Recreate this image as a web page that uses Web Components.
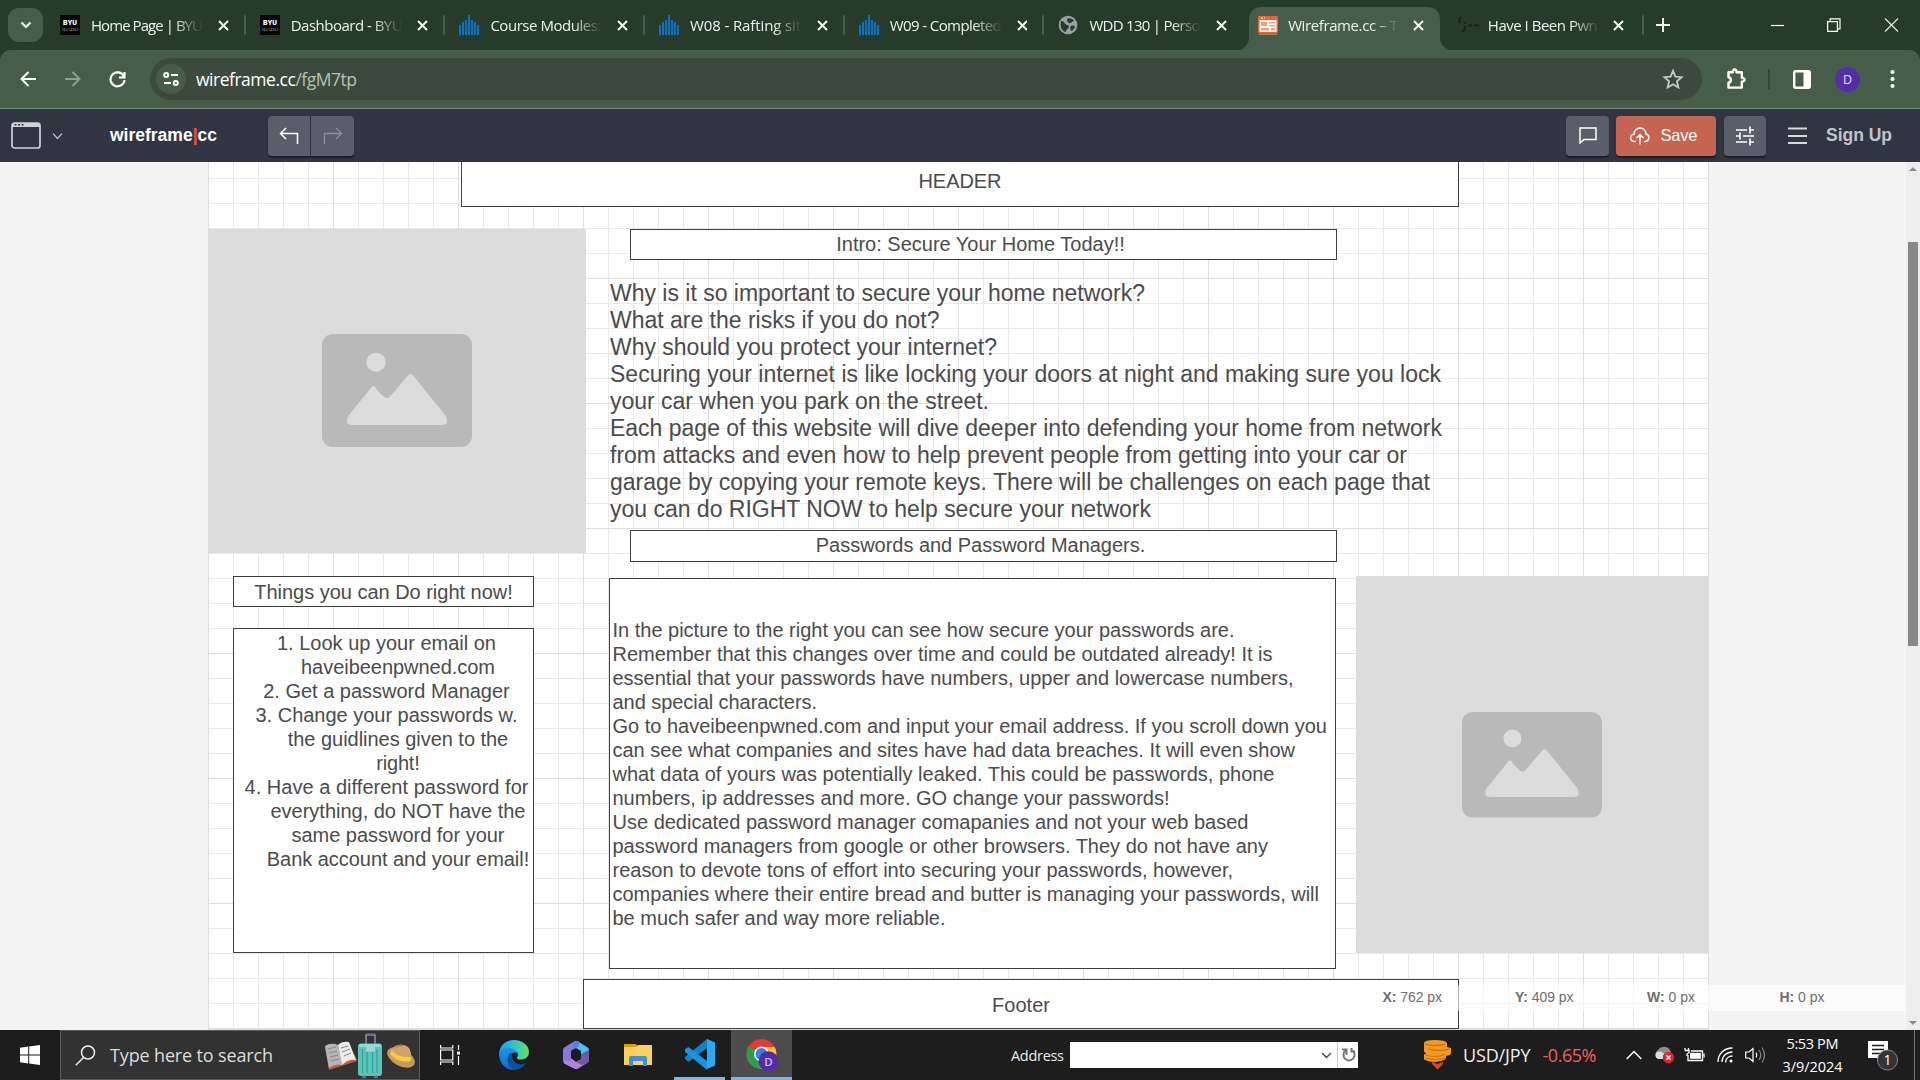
<!DOCTYPE html>
<html lang="en">
<head>
<meta charset="utf-8">
<title>Wireframe.cc</title>
<style>
html,body{margin:0;width:1920px;height:1080px;overflow:hidden;background:#f4f4f4}
</style>
</head>
<body>
<desktop-screen></desktop-screen>
<script>
const make = (name, html, after) => customElements.define(name, class extends HTMLElement {
  connectedCallback() {
    if (this.shadowRoot) return;
    const t = document.createElement('template');
    t.innerHTML = typeof html === 'function' ? html(this) : html;
    this.attachShadow({ mode: 'open' }).appendChild(t.content.cloneNode(true));
    if (after) after(this);
  }
});

/* One line of text, tracked so that it is exactly w pixels wide. */
make('fit-text', `<style>:host{display:block;white-space:nowrap;flex:none}span{display:inline-block;white-space:pre}</style><span><slot></slot></span>`, el => {
  const w = parseFloat(el.getAttribute('w'));
  if (!w) return;
  const s = el.shadowRoot.querySelector('span');
  const n = el.textContent.length;
  const ls = (w - s.getBoundingClientRect().width) / (n - 1);
  s.style.letterSpacing = ls + 'px';
  s.style.marginRight = -ls + 'px';
});

const fav = {
  byu: `<svg width="20" height="20"><rect width="20" height="20" fill="#050505"/><text x="10" y="9.6" font-family="Roboto" font-weight="900" font-size="7" text-anchor="middle" fill="#fff" textLength="14">BYU</text><text x="10" y="16" font-family="Liberation Serif" font-size="5" text-anchor="middle" fill="#999" textLength="16">IDAHO</text></svg>`,
  bars: `<svg width="20" height="20" fill="#0a72c4"><path d="M0 10h2v10H0zM3 7h2v13H3zM6 5h2v15H6zM9 0h2v20H9zM12 5h2v15h-2zM15 7h2v13h-2zM18 10h2v10h-2z"/></svg>`,
  globe: `<svg width="20" height="20"><circle cx="10" cy="10" r="9.3" fill="#9aa0a6"/><path d="M3 6c4 0 3 3 6 4 3 0 2 4 0 4-1 2-1 3-2 3-4-2-5-7-4-11zM10 3c2 1 5 0 6 3-2 0-2 2-4 2s-4-2-2-5zM13 11c2-1 4 0 4 1-1 2-2 3-4 4-1-2-1-4 0-5z" fill="#263b2a"/></svg>`,
  wire: `<svg width="20" height="20"><rect y="1" width="20" height="17.5" rx="1" fill="#f2602c"/><rect x="1.5" y="5" width="17" height="12" fill="#fff"/><path d="M3 3h2M6 3h1" stroke="#fff"/><path d="M3 7h6v4H3zM11 7h6v1.5h-6zM11 10h6v1.5h-6zM3 13h8v2.5H3zM13 13h4v2.5h-4z" fill="#fb9a77"/><path d="M1 19.3h18" stroke="#9a9a86"/></svg>`,
  pwn: `<svg width="22" height="20" fill="none" stroke="#17231a" stroke-width="1.8"><path d="M3 2C1 4 1 6 2 8M7 7v2M7 11c0 3-1 5-3 6M10 10.5h4M16 10.5h5"/></svg>`
};

make('browser-tab', el => `<style>
:host{display:flex;align-items:center;position:relative;width:199.7px;height:50px;box-sizing:border-box;padding-left:14px;flex:none}
.f{width:20px;height:20px;flex:none;z-index:1}
.t{width:113px;margin-left:11px;overflow:hidden;z-index:1;height:24px;line-height:24px;color:#eef2ee;font:15px/24px "Open Sans",sans-serif;-webkit-mask-image:linear-gradient(90deg,#000 74%,transparent 100%);mask-image:linear-gradient(90deg,#000 74%,transparent 100%)}
.x{margin-left:15px;z-index:1}
.s{margin-left:15px;width:2px;height:20px;background:#47604b;border-radius:1px;flex:none}
.bg{position:absolute;left:-10px;top:7px}
:host([nosep]) .s{visibility:hidden}
:host([late]) .t{margin-left:10px}
:host([late]) .x{margin-left:13.500px}
:host([late]) .s{margin-left:17.500px}
</style>${el.hasAttribute('active') ? `<svg class="bg" width="222" height="44"><path d="M0 44C9 44 15 38 15 30V14Q15 0 28 0H193Q206 0 206 14V30C206 38 212 44 221 44z" fill="#465e49"/></svg>` : ''}
<div class="f">${fav[el.getAttribute('icon')]}</div>
<div class="t"><fit-text w="${el.getAttribute('w')}">${el.textContent}</fit-text></div>
<svg class="x" width="11" height="11"><path d="M1 1l9 9M10 1l-9 9" stroke="#f4f6f4" stroke-width="2"/></svg><div class="s"></div>`);

make('tab-strip', `<style>
:host{display:flex;height:50px;background:#263b2a;align-items:center}
.m{width:35px;height:34px;border-radius:11px;background:#465e49;margin:0 3px 0 8px;display:grid;place-items:center;flex:none}
svg{display:block;flex:none}
</style>
<div class="m"><svg width="12" height="8"><path d="M1.500 1.500L6 6l4.500-4.500" fill="none" stroke="#fff" stroke-width="2.200"/></svg></div>
<browser-tab icon="byu" w="112">Home Page | BYU</browser-tab>
<browser-tab icon="byu" w="112">Dashboard - BYU</browser-tab>
<browser-tab icon="bars" w="111">Course Modules:</browser-tab>
<browser-tab icon="bars" w="111">W08 - Rafting sit</browser-tab>
<browser-tab icon="bars" w="112">W09 - Completed</browser-tab>
<browser-tab icon="globe" w="111" nosep>WDD 130 | Perso</browser-tab>
<browser-tab icon="wire" w="110" active nosep late>Wireframe.cc – T</browser-tab>
<browser-tab icon="pwn" w="110" late>Have I Been Pwn</browser-tab>
<svg style="margin-left:12px" width="14" height="14"><path d="M7 0v14M0 7h14" stroke="#f4f6f4" stroke-width="2"/></svg>
<svg style="margin-left:101px" width="13" height="14"><path d="M0 7.500h13" stroke="#fff" stroke-width="1.200"/></svg>
<svg style="margin-left:43px" width="14" height="14" fill="none" stroke="#fff" stroke-width="1.200"><path d="M.6 3.600h9.800v9.800H.6zM3.200 3.400V.8h9.800v10h-2.400"/></svg>
<svg style="margin-left:43px" width="15" height="14"><path d="M1 .5l13 13M14 .5l-13 13" stroke="#dfe4df" stroke-width="1.200"/></svg>`);

make('address-bar', `<style>
:host{display:block;background:#263b2a}
.b{display:flex;height:58px;align-items:center;background:#465e49;border-bottom:1px solid #6f8a72;border-radius:11px 11px 0 0}
svg{display:block;flex:none}
.o{display:flex;align-items:center;margin-left:24px;width:1552px;height:42px;border-radius:21px;background:#3c4a3e;flex:none;box-sizing:border-box;padding-left:6px}
.c{width:30px;height:30px;border-radius:50%;background:#465e49;display:grid;place-items:center}
.u{margin-left:10px;font:17.500px/30px "Open Sans",sans-serif;color:#fff}
.u span{color:#b4c2b2}
.a{width:25px;height:25px;border-radius:50%;background:#512da8;margin-left:24px;display:grid;place-items:center;color:#e8e0f8;font:12.500px/25px "Open Sans",sans-serif;flex:none}
</style><div class="b">
<svg style="margin-left:20px" width="16" height="16" fill="none" stroke="#fff" stroke-width="2"><path d="M8.500 1L1.500 8l7 7M1.500 8H16"/></svg>
<svg style="margin-left:29px" width="16" height="16" fill="none" stroke="#90a08f" stroke-width="2"><path d="M7.500 1l7 7-7 7M14.500 8H0"/></svg>
<svg style="margin-left:28px" width="17" height="17" fill="none" stroke="#fff" stroke-width="2.200"><path d="M14.800 5.200A7 7 0 1 0 15.500 9M15.500 1v5.500H10"/></svg>
<div class="o"><div class="c"><svg width="16" height="14" fill="none" stroke="#fff" stroke-width="2"><circle cx="3.200" cy="3" r="2"/><path d="M8 3h7M1 11h7"/><circle cx="12.800" cy="11" r="2"/></svg></div>
<div class="u"><fit-text w="161">wireframe.cc<span>/fgM7tp</span></fit-text></div>
<svg style="margin-left:1305px" width="22" height="20" fill="none" stroke="#c4ccc4" stroke-width="1.800"><path d="M11 1.800l2.400 5.900 6.200.5-4.700 4.100 1.500 6.200L11 15.200l-5.400 3.300 1.500-6.200-4.700-4.100 6.200-.5z"/></svg></div>
<svg style="margin-left:23px" width="22" height="22" fill="none" stroke="#fff" stroke-width="2.400"><path d="M3.500 4.200h4.200c-.4-3.600 4.200-3.600 3.800 0h5.300v5.600c3.600-.2 3.600 4 0 3.800v6H3.500v-4.800c3.200-.6 3.200-5 0-5.600z" stroke-linejoin="round"/></svg>
<div style="margin-left:21px;width:1.500px;height:20px;background:#2f4733;flex:none"></div>
<svg style="margin-left:23.500px" width="18" height="19"><rect x="1.200" y="1.200" width="15.600" height="16.600" rx="1.500" fill="none" stroke="#fff" stroke-width="2.400"/><path d="M10.500 1h6v17h-6z" fill="#fff"/></svg>
<div class="a">D</div>
<svg style="margin-left:30px" width="5" height="20" fill="#fff"><circle cx="2.500" cy="3" r="2.100"/><circle cx="2.500" cy="10" r="2.100"/><circle cx="2.500" cy="17" r="2.100"/></svg>
</div>`);

make('app-bar', `<style>
:host{display:flex;height:53px;background:#303542;align-items:center;font-family:"Liberation Sans",sans-serif}
svg{display:block;flex:none}
.l{font-weight:700;font-size:17.500px;color:#fff;margin-left:47px;margin-top:-1px}.l span{color:#f0503c}
.g{display:grid;place-items:center;height:40px;background:#5a5e69;box-shadow:0 1.500px 1px #1c2029;flex:none}
.s{display:flex;align-items:center;width:100px;height:40px;background:#c66452;border-radius:4px;box-shadow:0 1.500px 1px #1c2029;margin-left:7px;color:#fff;font-size:16.500px;flex:none}
</style>
<svg style="margin-left:11px" width="30" height="27"><rect x="1" y="1" width="28" height="25" rx="2.500" fill="none" stroke="#d0d2d6" stroke-width="1.700"/><path d="M1 5V3a2 2 0 0 1 2-2h24a2 2 0 0 1 2 2v2z" fill="#d0d2d6"/><path d="M3.500 2.800h2M7 2.800h2M10.500 2.800h2" stroke="#303542" stroke-width="1.500"/></svg>
<svg style="margin-left:11px" width="11" height="8" fill="none" stroke="#b9bcc2" stroke-width="1.200"><path d="M1 1.500l4.500 5 4.500-5"/></svg>
<div class="l"><fit-text w="107">wireframe<span>|</span>cc</fit-text></div>
<div class="g" style="margin-left:51px;width:42px;border-radius:4px 0 0 4px"><svg width="20" height="18" fill="none" stroke="#fff" stroke-width="1.500"><path d="M7 1L1.500 6.500 7 12M1.500 6.500H18.500V17"/></svg></div>
<div class="g" style="margin-left:1px;width:43px;border-radius:0 4px 4px 0"><svg width="20" height="18" fill="none" stroke="#8d9098" stroke-width="1.300"><path d="M13 1l5.500 5.500L13 12M18.500 6.500H1.500V17"/></svg></div>
<div class="g" style="margin-left:1212px;width:43px;border-radius:4px"><svg width="18" height="17" fill="none" stroke="#fff" stroke-width="1.500"><path d="M1 1h16v11.500H5L1 16z"/></svg></div>
<div class="s"><svg style="margin-left:14px" width="20" height="18" fill="none" stroke="#fff" stroke-width="1.500"><path d="M6 14.500H4.500A3.600 3.600 0 0 1 4 7.300C4 3.500 6.800 1 10 1s6 2.500 6 6c4 1 3.600 7.500-1 7.500h-1M10 17.500V8M6.500 11L10 7.500l3.500 3.500"/></svg><fit-text w="37" style="margin-left:10.500px">Save</fit-text></div>
<div class="g" style="margin-left:8px;width:42px;border-radius:4px"><svg width="18" height="20" fill="none" stroke="#fff" stroke-width="1.600"><path d="M0 4h11M14 4h4M14 .5v7M0 10h4M4 6.500v7M7 10h11M0 16h11M14 16h4M14 12.500v7"/></svg></div>
<svg style="margin-left:22px" width="19" height="18" stroke="#d6d8dc" stroke-width="1.800"><path d="M0 1.500h19M0 9h19M0 16h19"/></svg>
<fit-text w="66" style="margin-left:19px;color:#c1c4c9;font-weight:700;font-size:17.500px">Sign Up</fit-text>`);

/* A bordered node on the canvas; x/y/w/h are its canvas coordinates. */
const place = el => `left:${el.getAttribute('x')}px;top:${el.getAttribute('y')}px;width:${el.getAttribute('w')}px;height:${el.getAttribute('h')}px`;
make('wire-box', el => `<style>
:host{position:absolute;${place(el)};box-sizing:border-box;border:1px solid #3f3f3f;background:#fff;display:flex;flex-direction:column;align-items:center;justify-content:center}
:host([plain]){border-color:transparent;background:none;align-items:flex-start;justify-content:flex-start}
:host([left]){align-items:flex-start;padding-left:2.500px}
:host([top]){justify-content:flex-start;padding-top:2px}
</style><slot></slot>`);
make('wire-image', el => `<style>:host{position:absolute;${place(el)};background:#dcdcdc;display:grid;place-items:center}svg{display:block}</style>
<svg width="${el.getAttribute('s')}" style="margin:${el.getAttribute('nudge')}" viewBox="0 0 150 113"><rect width="150" height="113" rx="11" fill="#b9b9b9"/><circle cx="54" cy="28.300" r="9.600" fill="#dcdcdc"/><path d="M30 84.500L48.500 55.500Q51.500 49.500 54.500 55.500L61.500 62.500Q65 65.500 68 62.500L85 42.500Q88.500 37.500 92 42.500L123.500 81.500Q128 91 119.500 91H30.500Q22 91 26.500 81.500L48.500 54.500Q51.500 49.500 54.500 54.500z" fill="#dcdcdc"/></svg>`);

const lines = (arr) => arr.map(([t, w, m]) => `<fit-text w="${w}" style="${m ? 'padding-right:23px' : ''}">${t}</fit-text>`).join('');
make('wire-canvas', `<style>
:host{display:block;position:relative;height:868px;background:#f4f4f4;overflow:hidden;color:#4b4b4b;font:20px/24px "Liberation Sans",sans-serif}
.p{margin-left:208px;width:1501px;height:867px;background-color:#fff;background-image:linear-gradient(90deg,#dedede 1px,transparent 1px),linear-gradient(#dedede 1px,transparent 1px),linear-gradient(90deg,#e9e9e9 1px,transparent 1px),linear-gradient(#e9e9e9 1px,transparent 1px);background-size:125px 125px,125px 125px,25px 25px,25px 25px;background-position:0 -9px,0 -9px,0 -9px,0 -9px;border-bottom:1px solid #ddd}
.i{position:absolute;left:1366px;top:823px;width:542px;height:26px;background:rgba(255,255,255,.6);display:flex;align-items:center;font-size:14px;line-height:24px;color:#6e6e6e}
.i fit-text{width:0;margin-top:-2px}
.sb{position:absolute;right:0;top:0;width:14px;height:868px;background:#ededed;display:flex;flex-direction:column;align-items:center}
.th{width:10px;height:404px;background:#888}
</style>
<div class="p"></div>
<wire-box x="461" y="-45" w="998" h="90"><fit-text w="83" style="margin-top:38px">HEADER</fit-text></wire-box>
<wire-image x="209" y="67" w="377" h="324" s="150" nudge="0 2px 2px 0"></wire-image>
<wire-box x="630" y="67" w="707" h="31"><fit-text w="288.500" style="padding:0 6px 2px 0">Intro: Secure Your Home Today!!</fit-text></wire-box>
<wire-box plain x="609" y="117" w="850" h="250" style="font-size:23px;line-height:27px">${lines([
['Why is it so important to secure your home network?',535],
['What are the risks if you do not?',329.5],
['Why should you protect your internet?',387],
['Securing your internet is like locking your doors at night and making sure you lock',831],
['your car when you park on the street.',379],
['Each page of this website will dive deeper into defending your home from network',832],
['from attacks and even how to help prevent people from getting into your car or',797],
['garage by copying your remote keys. There will be challenges on each page that',820],
['you can do RIGHT NOW to help secure your network',541]])}</wire-box>
<wire-box x="630" y="368" w="707" h="32"><fit-text w="329.500" style="padding:0 6px 2px 0">Passwords and Password Managers.</fit-text></wire-box>
<wire-box x="233" y="414" w="301" h="31"><fit-text w="258.500">Things you can Do right now!</fit-text></wire-box>
<wire-box top x="233" y="466" w="301" h="325" style="padding-left:29px">${lines([
['1. Look up your email on',219,1],['haveibeenpwned.com',194],['2. Get a password Manager',246.5,1],['3. Change your passwords w.',262,1],['the guidlines given to the',220.5],['right!',43.5],['4. Have a different password for',284,1],['everything, do NOT have the',255],['same password for your',213],['Bank account and your email!',262.5]])}</wire-box>
<wire-box left x="609" y="416" w="727" h="391">${lines([
['In the picture to the right you can see how secure your passwords are.',622],
['Remember that this changes over time and could be outdated already! It is',660],
['essential that your passwords have numbers, upper and lowercase numbers,',681],
['and special characters.',204.5],
['Go to haveibeenpwned.com and input your email address. If you scroll down you',714.5],
['can see what companies and sites have had data breaches. It will even show',682.5],
['what data of yours was potentially leaked. This could be passwords, phone',662],
['numbers, ip addresses and more. GO change your passwords!',557],
['Use dedicated password manager comapanies and not your web based',636],
['password managers from google or other browsers. They do not have any',655.5],
['reason to devote tons of effort into securing your passwords, however,',620.5],
['companies where their entire bread and butter is managing your passwords, will',706.5],
['be much safer and way more reliable.',333]])}</wire-box>
<wire-image x="1356" y="414" w="352.500" h="377" s="140" nudge="1px 0 0 0"></wire-image>
<wire-box x="583" y="817" w="876" h="50"><fit-text w="58" style="padding-top:2px">Footer</fit-text></wire-box>
<div class="i"><fit-text w="59.500" style="margin-left:16.500px"><b>X:</b> 762 px</fit-text><fit-text w="58.500" style="margin-left:132.500px"><b>Y:</b> 409 px</fit-text><fit-text w="48" style="margin-left:132px"><b>W:</b> 0 px</fit-text><fit-text w="45" style="margin-left:132.500px"><b>H:</b> 0 px</fit-text></div>
<div class="sb"><svg style="margin-top:5px;flex:none" width="8" height="4"><path d="M0 4L4 0l4 4z" fill="#8a8a8a"/></svg><div class="th" style="margin-top:71px;flex:none"></div><svg style="margin-top:375px;flex:none" width="8" height="4"><path d="M0 0l4 4 4-4z" fill="#8a8a8a"/></svg></div>`);

make('task-bar', `<style>
:host{display:flex;height:50px;background:#1d1d1d;align-items:center;font-family:"Open Sans",sans-serif;color:#fff}
svg{display:block;flex:none}
.s{display:flex;align-items:center;box-sizing:border-box;width:360px;height:50px;margin-left:20px;background:#323232;border:1px solid #5c5c5c;flex:none}
.ap{display:flex;flex-direction:column;height:50px;flex:none;box-sizing:border-box;padding-top:9px;justify-content:space-between;align-items:center}
.ap i{display:block;height:3px;background:#76b9ed;align-self:stretch}
.ad{display:flex;width:288px;height:26px;background:#fff;margin-left:6px;align-items:center;flex:none}
.ck{width:62px;font-size:14.500px;line-height:23px;display:flex;flex-direction:column;align-items:center;flex:none;margin-top:-1px}
</style>
<svg style="margin-left:20px" width="20" height="20" fill="#fff"><path d="M0 2.700L8.200 1.600V9.500H0zM9.200 1.400L20 0v9.500H9.200zM0 10.500h8.200v7.900L0 17.300zM9.200 10.500H20V20L9.200 18.600z"/></svg>
<div class="s">
<svg style="margin-left:14px" width="21" height="21" fill="none" stroke="#eee" stroke-width="1.500"><circle cx="13" cy="7.500" r="6.500"/><path d="M8.500 12.500L.8 20.200"/></svg>
<fit-text w="163" style="margin-left:14px;font-size:18px;color:#dcdcdc">Type here to search</fit-text>
<svg style="margin-left:52px" width="92" height="48" viewBox="0 0 92 48">
<path d="M0 17l4 22 28-9-2-6z" fill="#c0603a"/><path d="M0 15l4 22q7-5 13-3L13 14q-7-3-13 1z" fill="#b4b5b8"/><path d="M13 14Q17 10 24 11l7 18q-8-1-14 5z" fill="#ecebea"/><path d="M3 18l8-2M4 22l8-2M5 26l8-2M6 30l8-2M16 17l7-2M17 21l8-3M19 25l7-3" stroke="#888" stroke-width="1"/>
<path d="M41 13V4h9v9" fill="none" stroke="#8d8f9a" stroke-width="1.600"/><path d="M41 3.500h9" stroke="#6f6fa0" stroke-width="2"/><rect x="33" y="12.500" width="24" height="32.500" rx="3" fill="#5cc4b8"/><rect x="34" y="13" width="22" height="3" rx="1.500" fill="#86e2d6"/><path d="M37.500 18v24M42 21v21M47.500 21v21M52 18v24" stroke="#349f94" stroke-width="1.200"/><rect x="41" y="15.500" width="9" height="5" rx="1.500" fill="#a5d6d0"/><path d="M37 46h4M49 46h4" stroke="#66689a" stroke-width="2.500"/>
<ellipse cx="76" cy="26.500" rx="15" ry="8.500" transform="rotate(28 76 26.500)" fill="#c39a5a"/><path d="M65 24q2 6 14 8 6 0 7-3l0-7q-1-8-10-8.500-9 0-11 10z" fill="#cfa468"/><path d="M66.500 19q6 8 19.500 7l0 4Q73 32 65 23z" fill="#f7cf3c"/><path d="M70 17q4-5 10-2-5-1-10 2z" fill="#8a6430"/></svg></div>
<svg style="margin-left:20px" width="20" height="20" fill="none" stroke="#fff" stroke-width="1.200"><path d="M.6 5h12.200v10H.6zM.6 0v3h12.200V0M.6 20v-3h12.200v3M18.500 0v5M18.500 11v9"/><path d="M17 6.500h3v3h-3z" fill="#fff" stroke="none"/></svg>
<svg style="margin-left:39px" width="30" height="30" viewBox="0 0 30 30"><defs><linearGradient id="e1" x1="0" x2="1"><stop offset="0" stop-color="#1a9fe6"/><stop offset=".55" stop-color="#35c5cf"/><stop offset="1" stop-color="#66e04c"/></linearGradient><linearGradient id="e2" x1="0" x2="0" y1="0" y2="1"><stop offset="0" stop-color="#1f97e4"/><stop offset="1" stop-color="#0b6ad0"/></linearGradient></defs><path d="M0 13C1 5 7 0 15 0c9 0 15 6 15 12 0 5-4 7.500-8 7.500-3 0-4.500-1-4-2 2-2 1-6-3-7C9 9 2 9 0 13z" fill="url(#e1)"/><path d="M0 13C2 9 8 6.500 13 8.500c3 1 5 3 5 5-2-2-5-1-6 2-2 7 4 12 10 11-2 2-6 3.500-8 3.500C5 29 0 22 0 13z" fill="url(#e2)"/><path d="M12.500 12.500C7 15 7 27 15 30c5 0 10-3 12-7-5 3-11 1-13-3-1-3-1-5-1.500-7.500z" fill="#0c4f9c"/></svg>
<svg style="margin-left:33px" width="28" height="30" viewBox="0 0 28 30"><path d="M12 1.500q2-1 4 0L25 7q2 1 2 3v8l-8-3v-4l-5-3z" fill="#4cc0f2"/><path d="M12 1.500L3 7q-2 1-2 3v11q0 2 2 3l6-3v-9q0-2 2-3l6-3V2q-2-1.500-5-.5z" fill="#8479da"/><path d="M16 1.500q-3-1-5 1v6l-2 2 5-2.500 3-2V2z" fill="#5b7fe0"/><path d="M2 20q3 2 7 0v-2l5 4 5-2.500 8-2.500v3q0 2-2 3l-9 5.500q-2 1-4 0L3 24q-1-1-1-4z" fill="#b184dc"/><path d="M19 14l8-4v10q0 2-2 3l-5 2-6-3 5-3z" fill="#6d58ae"/><path d="M14 10l5 2.500v5.500l-5 3-5-3v-5.500z" fill="#1d1d1d"/></svg>
<svg style="margin-left:34px" width="28" height="24" viewBox="0 0 28 24"><path d="M0 1h12l2 3-2 3H0z" fill="#dd9c0b"/><path d="M0 4h12l2-2h14v20H0z" fill="#fcd05a"/><path d="M5 23V15q0-2 2-2h14q2 0 2 2v8h-4v-5H9v5z" fill="#3b93d8"/></svg>
<div class="ap" style="margin-left:22px;width:51px"><svg width="30" height="31" viewBox="0 0 30 31"><path d="M22 0v9L3.500 23 0 20V18z" fill="#1280ca"/><path d="M22 31v-9L3.500 8 0 10v3z" fill="#1b93dc"/><path d="M22 0l8 3.500v23L22 30z" fill="#2aaaf4"/></svg><i></i></div>
<div class="ap" style="margin-left:6px;width:61px;background:#4c4c4c"><svg width="34" height="33" viewBox="0 0 34 33" style="margin-left:3px"><circle cx="15.500" cy="15" r="15" fill="#e33b2e"/><path d="M2.500 7.500A15 15 0 0 0 15 30l7-12z" fill="#2c9f4b"/><path d="M15.500 8h13.200A15 15 0 0 1 15 30l7-12z" fill="#fcc629"/><circle cx="15.500" cy="15" r="7.500" fill="#fff"/><circle cx="15.500" cy="15" r="6" fill="#3b7de6"/><circle cx="22.500" cy="22.300" r="10" fill="#512da8"/><text x="22.500" y="26.500" text-anchor="middle" fill="#cdbfee" font-size="11.500" font-weight="600" font-family="Open Sans">D</text></svg><i></i></div>
<fit-text w="53" style="margin-left:219px;font-size:14.500px;color:#e8e8e8">Address</fit-text>
<div class="ad"><svg style="margin-left:251px" width="11" height="7" fill="none" stroke="#444" stroke-width="1.300"><path d="M1 1l4.500 4.500L10 1"/></svg><div style="margin-left:5px;width:1px;height:26px;background:#c8c8c8"></div><svg style="margin-left:4px" width="14" height="16" fill="none" stroke="#777" stroke-width="2"><path d="M10.500 3.500A5.600 5.600 0 1 1 3.500 3.500M0 2.500h4.500V8M9.500 1v3.500H13"/></svg></div>
<svg style="margin-left:66px" width="28" height="30" viewBox="0 0 28 30"><path d="M0 3q0-3 11-3t12 3v4l4 1v6q-3 2-5 2v3q-5 3-11 3t-11-2.500v-5l2-1-2-2z" fill="#f29a24"/><path d="M1 4q9 3 21 0M4 9q12 3 22 0M1 14.500q9 4 20 0M1 18q9 3 21 0" fill="none" stroke="#ce700e" stroke-width="1.200"/><path d="M8 22l5.500 2 5.500-2v2l-5.500 5.500L8 24z" fill="#d8491b"/></svg>
<fit-text w="67.500" style="margin-left:11px;font-size:18px;color:#eee">USD/JPY</fit-text>
<fit-text w="54" style="margin-left:12px;font-size:18px;color:#f0605e">-0.65%</fit-text>
<svg style="margin-left:30px" width="16" height="10" fill="none" stroke="#fff" stroke-width="1.500"><path d="M.7 9L8 1.500 15.300 9"/></svg>
<svg style="margin-left:12px" width="21" height="18"><path d="M5 13a5 5 0 0 1-1-9Q7 0 12 1q4 1 5 6l-3 6z" fill="#8d8d8d"/><path d="M4 13a4 4 0 0 1-1-7q5-2 9 4v3z" fill="#ddd"/><circle cx="14.500" cy="11.500" r="5.700" fill="#e0222b"/><path d="M12.300 9.300l4.400 4.400M16.700 9.300l-4.400 4.400" stroke="#fff" stroke-width="1.500"/></svg>
<svg style="margin-left:9px" width="21" height="14" fill="none" stroke="#fff" stroke-width="1.300"><path d="M4 7v5.500h14.500V3H7"/><path d="M6 4.800h10.800v6H6z" fill="#fff" stroke="none"/><path d="M20 5.500v4M1 0v2M4.500 0v2M.6 2.500h4.500v2L3 6v2"/></svg>
<svg style="margin-left:12px" width="17" height="16" fill="none" stroke="#fff" stroke-width="1.300"><path d="M1 15C1 7 7 1 15.500 1M5 15c0-6 4.500-10 10.500-10M8.700 15.500c0-4 3-6.500 6.800-6.500" /><circle cx="14" cy="14" r="1.500" fill="#fff" stroke="none"/></svg>
<svg style="margin-left:11px" width="21" height="18" fill="none" stroke="#fff" stroke-width="1.200"><path d="M.7 6v6H4l4 3.500v-13L4 6zM11 6.500q1.600 2.500 0 5"/><path d="M14 4q3.500 5 0 10M17 1.500q5 7.500 0 15" stroke="#8a8a8a"/></svg>
<div class="ck" style="margin-left:15px"><fit-text w="52">5:53 PM</fit-text><fit-text w="60">3/9/2024</fit-text></div>
<svg style="margin-left:25px" width="32" height="32"><path d="M0 2h20v17h-7l-4 4v-4H0z" fill="#fff"/><path d="M4 6.500h12M4 10.500h12M4 14.500h9" stroke="#1d1d1d" stroke-width="1.300"/><circle cx="19.500" cy="21" r="10" fill="#333" stroke="#888"/><text x="19.500" y="26" font-size="14" font-family="Open Sans" fill="#fff" text-anchor="middle">1</text></svg>
<div style="margin-left:14px;width:1px;height:50px;background:#777;flex:none"></div>`);

make('desktop-screen', `<style>:host{display:flex;flex-direction:column;width:1920px;height:1080px}</style>
<tab-strip></tab-strip><address-bar></address-bar><app-bar></app-bar><wire-canvas></wire-canvas><task-bar></task-bar>`);
</script>
</body>
</html>
